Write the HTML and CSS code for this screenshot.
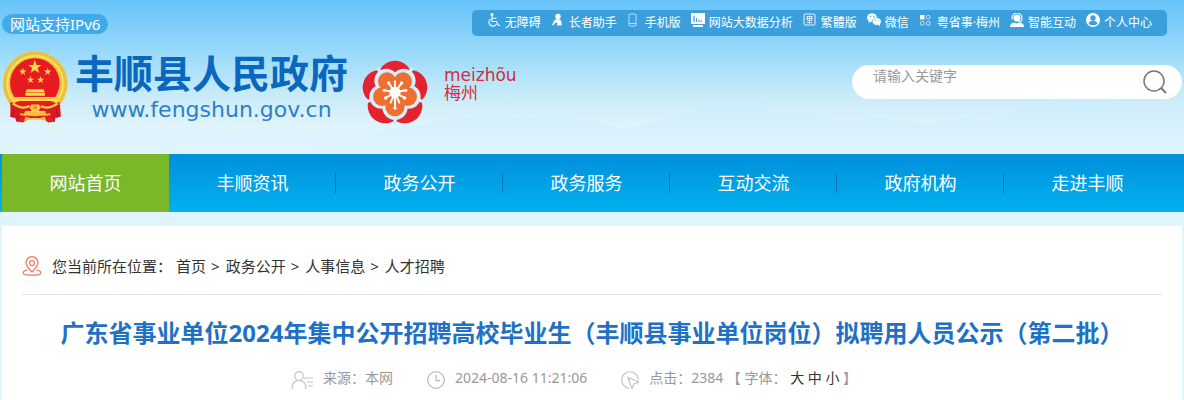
FILE: index.html
```
<!DOCTYPE html>
<html lang="zh-CN">
<head>
    <meta charset="UTF-8">
    <meta name="viewport" content="width=device-width, initial-scale=1.0">
    <title>丰顺县人民政府</title>
    <link rel="stylesheet" href="styles.css">
</head>
<body>
    <header class="header">
        <svg class="hills" viewBox="0 0 1184 60" preserveAspectRatio="none" aria-hidden="true">
            <path fill="url(#hill)" d="M300 60 Q420 24 500 22 L525 25 L550 22 L590 27 L620 34 L640 32 L700 16 L725 13 Q745 9 757 14 L780 21 L815 20 L835 26 L885 24 L925 30 L965 24 L990 27 L1030 12 L1075 5 Q1100 5 1120 10 L1155 16 L1184 13 V60 H300z"/>
            <defs>
                <linearGradient id="hill" x1="0" y1="0" x2="0" y2="1">
                    <stop offset="0" stop-color="#c8ebfc"/>
                    <stop offset=".5" stop-color="#d7f1fc"/>
                    <stop offset="1" stop-color="#dff4fc"/>
                </linearGradient>
            </defs>
        </svg>

        <div class="top-row">
            <span class="ipv6">网站支持IPv6</span>
            <div class="tools">
                <a href="#"><svg viewBox="0 0 14 14"><g fill="none" stroke="#fff" stroke-width="1.1"><circle cx="5" cy="1.6" r="1"/><path d="M5 3v5.5h4.5l2 4h1.5M5.5 5.3h4M3.5 6a4 4 0 1 0 6 5"/></g></svg>无障碍</a>
                <a href="#"><svg viewBox="0 0 14 14" fill="#fff"><circle cx="7" cy="3.500" r="2.700"/><path d="M5 6 L9 6.500 Q11 8 10.500 12.500 H6 L6.500 10 L4.500 9.500 L2 12.500 L1 12 L3 8z"/></svg>长者助手</a>
                <a href="#"><svg viewBox="0 0 14 14"><rect x="2" y="1" width="7" height="12" rx="1" fill="none" stroke="#b6ddf5"/><path d="M2 10.500h7" stroke="#b6ddf5"/></svg>手机版</a>
                <a href="#"><svg viewBox="0 0 14 14"><path fill="#fff" d="M0 0h14v11H0zM2 12h10v2H2z"/><path d="M3 3v6M5.5 5v4M8 6.5V9M10.500 7.500V9" stroke="#3b9fdb" stroke-width="1.200"/></svg>网站大数据分析</a>
                <a href="#"><svg viewBox="0 0 14 14"><g fill="none" stroke="#e4f4fd"><rect x="1" y="1" width="11" height="11" rx="1"/><path d="M3.500 3.500h6M3 5.500h7M4 7.500h5M3.500 9.500h6M6.500 2.500v8.500M4.500 3v4M8.500 3v4" stroke-width=".8"/></g></svg>繁體版</a>
                <a href="#"><svg viewBox="0 0 14 14" fill="#fff"><ellipse cx="5" cy="4.500" rx="5" ry="4.300"/><path d="M2 7l-.5 3 3-1.500z"/><ellipse cx="9.800" cy="8.500" rx="4.500" ry="3.800" stroke="#3b9fdb" stroke-width=".6"/><path d="M11 11.500l2 1.700v-3z"/><g fill="#3b9fdb"><circle cx="3.500" cy="3.500" r=".7"/><circle cx="6.700" cy="3.500" r=".7"/><circle cx="8.500" cy="7.500" r=".5"/><circle cx="11.200" cy="7.500" r=".5"/></g></svg>微信</a>
                <a href="#"><svg viewBox="0 0 14 14"><rect x="1" y="2" width="4.500" height="4.500" fill="#fff"/><g fill="none" stroke="#c3e4f8"><rect x="7.500" y="2.500" width="3.500" height="3.500" rx="1"/><rect x="1.500" y="8.500" width="3.500" height="3.500" rx="1"/><rect x="7.500" y="8.500" width="3.500" height="3.500" rx="1"/></g></svg>粤省事·梅州</a>
                <a href="#"><svg viewBox="0 0 14 14"><circle cx="7" cy="5" r="3.600" fill="#fff"/><path d="M2 6.500V5a5 5 0 0 1 10 0v1.500M12 6q0 3-4 3" fill="none" stroke="#fff" stroke-width="1.100"/><path fill="#fff" d="M0 14q0-4 4-4.500l3 1 3-1q4 .5 4 4.500z"/></svg>智能互动</a>
                <a href="#"><svg viewBox="0 0 14 14"><circle cx="7" cy="7" r="7" fill="#fff"/><circle cx="7" cy="5" r="2.700" fill="#3b9fdb"/><path fill="#3b9fdb" d="M2.500 11q.5-3 3-3.300h3q2.500.3 3 3.300Q7 13.500 2.500 11z"/></svg>个人中心</a>
            </div>
        </div>

        <div class="brand-row">
            <a class="brand" href="#">
                <svg class="emblem" viewBox="6 148 200 218" role="img" aria-label="国徽">
                    <path fill="#e0202a" d="M34 296 L178 296 L182 345 L165 350 L164 361 L144 363 L128 350 H88 L68 363 L48 360 L46 350 L30 346z"/>
                    <circle cx="105" cy="247" r="97" fill="#f0c540"/>
                    <circle cx="105" cy="247" r="91" fill="none" stroke="#d9a22b" stroke-width="2" stroke-dasharray="6 5"/>
                    <circle cx="105" cy="247" r="83" fill="none" stroke="#f9df62" stroke-width="5"/>
                    <circle cx="104" cy="245" r="74" fill="#e91b22"/>
                    <g fill="#fbdc4b">
                        <path id="star" d="M104 176 L109 191 H124 L112 200 L117 215 L104 206 L91 215 L96 200 L84 191 H99z"/>
                        <use href="#star" transform="translate(11 103) scale(.55)"/>
                        <use href="#star" transform="translate(85 103) scale(.55)"/>
                        <use href="#star" transform="translate(34 127) scale(.55)"/>
                        <use href="#star" transform="translate(64 127) scale(.55)"/>
                        <path d="M80 264h50l4 9H76zM76 274h58v9H76zM46 287h118l6 12H40z"/>
                    </g>
                    <path d="M50 292h110" stroke="#e4a02a" stroke-width="2"/>
                    <path fill="#e91b22" d="M46 301h116l-20 28H68z"/>
                    <path fill="#d81c27" d="M30 303 Q62 302 78 318 L68 350 L34 346zM178 303 Q148 302 132 318 L142 350 L178 346z"/>
                    <path d="M38 306 Q66 326 88 314 M172 306 Q144 326 122 314" fill="none" stroke="#f7cf45" stroke-width="7"/>
                    <path d="M60 338 Q90 344 104 330 Q120 344 150 338" fill="none" stroke="#f3c43b" stroke-width="6"/>
                    <path d="M88 318l6-9h22l6 9-8 12H96z" fill="#f5cb44"/>
                    <circle cx="105" cy="318" r="6" fill="#e39a2a"/>
                    <path d="M42 324l-5 22M54 345l-3 14M160 345l3 14M168 324l5 22" stroke="#a8131c" stroke-width="3"/>
                    <path d="M76 346q29 10 58 0l4 12q-33-8-66 0z" fill="#efbf38"/>
                </svg>
                <span class="brand-text">
                    <span class="brand-name">丰顺县人民政府</span>
                    <span class="brand-url">www.fengshun.gov.cn</span>
                </span>
            </a>
            <a class="meizhou" href="#">
                <svg class="flower" viewBox="38 58 198 192" role="img" aria-label="梅州">
                    <g fill="#e52330">
                        <circle cx="137" cy="110" r="50"/>
                        <circle cx="182" cy="140" r="52"/>
                        <circle cx="166" cy="195" r="53"/>
                        <circle cx="108" cy="195" r="53"/>
                        <circle cx="92" cy="140" r="52"/>
                    </g>
                    <path d="M137 155L190 82M137 155L226 184M137 155V252M137 155L48 184M137 155L84 82" stroke="#ccecfb" stroke-width="10"/>
                    <g fill="#d5effb">
                        <circle cx="163" cy="120" r="36"/>
                        <circle cx="178" cy="168" r="36"/>
                        <circle cx="137" cy="200" r="38"/>
                        <circle cx="96" cy="168" r="36"/>
                        <circle cx="111" cy="120" r="36"/>
                    </g>
                    <g fill="#ee6f30">
                        <circle cx="161" cy="122" r="27"/>
                        <circle cx="175" cy="168" r="28"/>
                        <circle cx="137" cy="198" r="29"/>
                        <circle cx="99" cy="168" r="28"/>
                        <circle cx="113" cy="122" r="27"/>
                        <circle cx="137" cy="155" r="38"/>
                    </g>
                    <g stroke="#fff" stroke-width="6" stroke-linecap="round">
                        <path d="M137 155V122M137 155L118 127M137 155L157 127M137 155L105 149M137 155L169 149M137 155L109 172M137 155L166 172M137 155L124 186M137 155L150 186M137 155V202"/>
                        <circle cx="137" cy="155" r="14" fill="#fff"/>
                    </g>
                    <g fill="#fff">
                        <circle cx="118" cy="127" r="5"/><circle cx="157" cy="127" r="5"/><circle cx="105" cy="149" r="5"/><circle cx="169" cy="149" r="5"/><circle cx="109" cy="172" r="5"/><circle cx="166" cy="172" r="5"/><circle cx="137" cy="202" r="5"/>
                    </g>
                </svg>
                <span class="meizhou-text">
                    <span>meizhõu</span>
                    <span>梅州</span>
                </span>
            </a>
            <form class="search">
                <input type="text" placeholder="请输入关键字" aria-label="请输入关键字">
                <button type="submit" aria-label="搜索">
                    <svg viewBox="0 0 26 26" fill="none" stroke="#777" stroke-width="1.500"><circle cx="12" cy="12" r="10"/><path d="M19 19l5 5" stroke-width="2"/></svg>
                </button>
            </form>
        </div>
    </header>

    <nav class="nav">
        <a class="active" href="#">网站首页</a>
        <a href="#">丰顺资讯</a>
        <a href="#">政务公开</a>
        <a href="#">政务服务</a>
        <a href="#">互动交流</a>
        <a href="#">政府机构</a>
        <a href="#">走进丰顺</a>
    </nav>

    <main class="content">
        <div class="crumbs">
            <svg viewBox="0 0 20 20" fill="none" stroke="#ee7458" stroke-width="1.200"><path d="M10 16Q4 10 4 6.700a6 6 0 0 1 12 0Q16 10 10 16z"/><circle cx="10" cy="7" r="2.500"/><path d="M5.500 14Q1 15 1 16.700C1 20 19 20 19 16.700Q19 15 14.500 14"/></svg>
            <span class="crumbs-label">您当前所在位置：</span>
            <a href="#">首页</a><span>&gt;</span>
            <a href="#">政务公开</a><span>&gt;</span>
            <a href="#">人事信息</a><span>&gt;</span>
            <a href="#">人才招聘</a>
        </div>

        <h1>广东省事业单位2024年集中公开招聘高校毕业生（丰顺县事业单位岗位）拟聘用人员公示（第二批）</h1>

        <div class="meta">
            <span class="meta-item">
                <svg class="wide" viewBox="0 0 22 18" fill="none" stroke="#c4c4c4" stroke-width="1.200"><circle cx="8" cy="5" r="4.300"/><path d="M1 18Q1 9.500 8 9.500T15 18M13 7h9M15.500 11H22M17 15h5"/></svg>
                来源：本网
            </span>
            <span class="meta-item">
                <svg viewBox="0 0 18 18" fill="none" stroke="#bbb" stroke-width="1.300"><circle cx="9" cy="9" r="8.300"/><path d="M9 4v5.500h4"/></svg>
                2024-08-16 11:21:06
            </span>
            <span class="meta-item">
                <svg viewBox="0 0 18 18" fill="none" stroke="#c4c4c4" stroke-width="1.200"><path d="M8 17.300A8.300 8.300 0 1 1 17.300 8.500M7 6.500l11 4.500-5 2-2 5z"/></svg>
                <span>点击：2384 【 字体： <a href="#">大</a> <a href="#">中</a> <a href="#">小</a> 】</span>
            </span>
        </div>
    </main>
</body>
</html>
```
FILE: styles.css
```
* {
    box-sizing: border-box;
}
body {
    margin: 0;
    background-color: #dff4fd;
    font-family: "Noto Sans", "Noto Sans CJK SC", sans-serif;
    color: #333;
}
a {
    color: inherit;
    text-decoration: none;
}
svg {
    display: block;
    flex: none;
}
.header {
    position: relative;
    padding: 10px 2px 30px;
    background: linear-gradient(#66c2f9, #97d9fb 33%, #c6eaf9 60%, #def3fa 80%, #dff4fc);
}
.hills {
    position: absolute;
    left: 0;
    bottom: 0;
    width: 100%;
    height: 60px;
}
.top-row {
    position: relative;
    display: flex;
    justify-content: space-between;
    align-items: flex-start;
}
.ipv6 {
    margin-top: 4px;
    padding: 0 8px;
    border-radius: 10px;
    background-color: #41aaea;
    color: #fff;
    font-size: 15px;
    line-height: 20px;
}
.tools {
    display: flex;
    gap: 10px;
    margin-right: 15px;
    padding: 0 15px;
    border-radius: 5px;
    background-color: #3b9fdb;
    color: #fff;
    font-size: 12px;
    line-height: 26px;
}
.tools a {
    display: flex;
    gap: 4px;
    white-space: nowrap;
}
.tools svg {
    width: 14px;
    height: 14px;
    margin-top: 3px;
}
.brand-row {
    position: relative;
    display: flex;
    align-items: flex-start;
    padding-top: 14px;
}
.brand {
    display: flex;
    gap: 6px;
    color: #0968bd;
}
.emblem {
    width: 67px;
    height: 74px;
}
.brand-text {
    display: flex;
    flex-direction: column;
    align-items: center;
}
.brand-name {
    font-size: 39px;
    font-weight: bold;
    line-height: 46px;
}
.brand-url {
    color: #2f7fc8;
    font-family: "DejaVu Sans", sans-serif;
    font-size: 22px;
    line-height: 28px;
}
.meizhou {
    display: flex;
    gap: 16px;
    margin: 10px 0 0 14px;
    color: #d52b3c;
}
.flower {
    width: 66px;
    height: 64px;
}
.meizhou-text {
    display: flex;
    flex-direction: column;
    padding-top: 6px;
    font-family: "DejaVu Sans", "Noto Sans CJK SC", sans-serif;
    font-size: 17px;
    line-height: 18px;
}
.search {
    display: flex;
    align-items: center;
    width: 330px;
    height: 34px;
    margin: 15px 0 0 auto;
    padding: 0 14px 0 21px;
    border-radius: 17px;
    background-color: #fff;
}
.search input {
    flex: 1;
    min-width: 0;
    height: 34px;
    padding: 0 0 14px;
    border: none;
    outline: none;
    background: none;
    font-family: inherit;
    font-size: 14px;
}
.search input::placeholder {
    color: #999;
}
.search button {
    padding: 0;
    border: none;
    background: none;
    cursor: pointer;
}
.search button svg {
    width: 26px;
    height: 26px;
}
.nav {
    display: flex;
    padding: 0 13px 0 2px;
    background: linear-gradient(#028fdb, #01b1ef);
}
.nav a {
    flex: 1;
    color: #fff;
    font-size: 18px;
    line-height: 58px;
    text-align: center;
    background: linear-gradient(#0a74b8, #0a74b8) right center / 1px 20px no-repeat;
}
.nav a:last-child {
    background: none;
}
.nav a.active {
    background: #79b829;
}
.content {
    margin: 14px 2px 0;
    padding: 14px 20px;
    background-color: #fff;
}
.crumbs {
    display: flex;
    align-items: center;
    padding-bottom: 2px;
    border-bottom: 1px solid #e5e5e5;
    font-size: 15px;
    line-height: 52px;
}
.crumbs svg {
    width: 20px;
    height: 20px;
    margin-right: 10px;
}
.crumbs span {
    margin: 0 6px 0 5px;
}
.crumbs .crumbs-label {
    margin: 0 4px 0 0;
}
h1 {
    margin: 20px 0 0;
    color: #1e71c4;
    font-size: 24px;
    line-height: 36px;
    text-align: center;
}
.meta {
    display: flex;
    justify-content: center;
    gap: 34px;
    margin-top: 16px;
    padding-right: 36px;
    color: #999;
    font-size: 14px;
    line-height: 22px;
}
.meta-item {
    display: flex;
    gap: 10px;
}
.meta svg {
    width: 18px;
    height: 18px;
    margin-top: 4px;
}
.meta svg.wide {
    width: 22px;
}
.meta a {
    color: #333;
}
```
